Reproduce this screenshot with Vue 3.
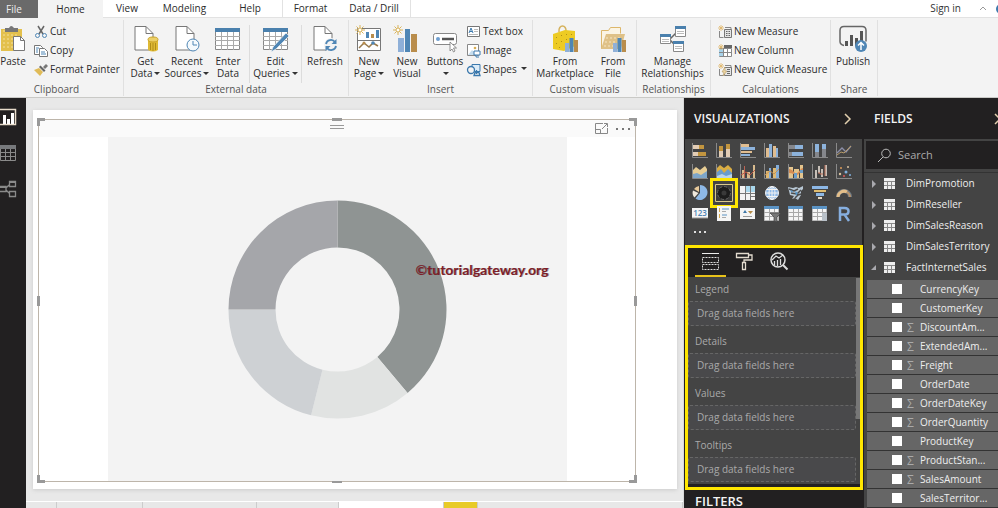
<script setup>
import { ref } from 'vue'

const tabs = ['File', 'Home', 'View', 'Modeling', 'Help', 'Format', 'Data / Drill']

const doc = '<path d="M3 1.5h11l7 7V25H3z" fill="#fff" stroke="#777"/><path d="M14 1.5v7h7" fill="none" stroke="#777"/>'
const grid = '<path d="M1.500 3.500h24v21h-24z" fill="#fff" stroke="#888"/><path d="M1 3h25v4H1z" fill="#4a80ad"/><path d="M1 11.500h25M1 15.500h25M1 20.500h25M7.500 7v18M13.500 7v18M19.500 7v18" stroke="#aaa"/>'
const spark = '<path d="M5 0v10M0 5h10M1.500 1.500l7 7M8.500 1.500l-7 7" stroke="#d9b45c"/><circle cx="5" cy="5" r="2" fill="#fff" stroke="#d9b45c"/>'
const bars = '<path d="M5 13h6v14H5z" fill="#8fb0d8"/><path d="M12 4h5v23h-5z" fill="#4f86b5"/><path d="M18 9h6v18h-6z" fill="#b98d4c"/>'
const miniBars = '<path d="M14 18h4v9h-4z" fill="#8fb0d8"/><path d="M18.500 13h4v14h-4z" fill="#4f86b5"/><path d="M23 15h4v12h-4z" fill="#b98d4c"/>'

const big = {
  paste: '<path d="M2 4h21v22H2z" fill="#e3c04d"/><path d="M4 6h16M4 10h16M4 14h16M4 18h16M4 22h16" stroke="#f3dfa0" stroke-dasharray="2 2"/><path d="M6 3h4q2-4 5 0h4v4H6z" fill="#777"/><path d="M14.500 11.500h7l4 4v10h-11z" fill="#fff" stroke="#777"/><path d="M21.500 11.500v4h4" fill="none" stroke="#777"/>',
  getData: doc + '<path d="M16 15h10v10q-5 3-10 0z" fill="#dfba35"/><ellipse cx="21" cy="14.500" rx="5" ry="2.500" fill="#ecd068" stroke="#c9a227"/><path d="M18.500 18v7M21 18v8M23.500 18v7" stroke="#b08d1a"/>',
  recent: doc + '<circle cx="20" cy="20" r="6" fill="#f5fafd" stroke="#4f86b5"/><path d="M20 16v4h4" fill="none" stroke="#4f86b5"/>',
  enter: grid,
  edit: grid + '<path d="M24 8l3 3-13 13-5 3 2-5z" fill="#4f86b5" stroke="#f3f3f3" stroke-width=".7"/>',
  refresh: doc + '<circle cx="20" cy="20" r="7" fill="#f3f3f3"/><path d="M15 19a5 5 0 0 1 9-2M25 21a5 5 0 0 1-9 2" fill="none" stroke="#4f86b5" stroke-width="1.800"/><path d="M25.500 14v5h-5zM14.500 26v-5h5z" fill="#4f86b5"/>',
  newPage: '<path d="M2.500 3.500h23v22h-23zM2.500 15.500h23" fill="#fff" stroke="#777"/><path d="M11 7h3v6h-3zM21 5h3v8h-3z" fill="#4f86b5"/><path d="M16 9h3v4h-3z" fill="#b98d4c"/><path d="M4 23l5-5 5 4 4-4 5 3" fill="none" stroke="#9a7a4c" stroke-width="1.500"/><circle cx="9" cy="18" r="1.500" fill="#b98d4c"/><circle cx="18" cy="18" r="1.800" fill="#4f86b5"/>' + spark,
  newVisual: bars + spark,
  buttons: '<rect x="2.500" y="8.500" width="23" height="11" rx="2" fill="#fff" stroke="#888"/><circle cx="7" cy="14" r="2" fill="#6f9fd0"/><path d="M11 14h12" stroke="#555" stroke-width="2.500"/><path d="M19 17v9l2-2 1.500 3 1.500-1-1.500-3h3z" fill="#fff" stroke="#777" stroke-width=".8"/>',
  market: '<path d="M8 7C7-1 16-1 15 7" fill="none" stroke="#d5b25d" stroke-width="1.500"/><path d="M2 9l12-4 10 1v15l-11 5-11-2z" fill="#edcb23"/><path d="M5 12l1 1M10 10l1 1M15 9l1 1M20 9l1 1M5 18l1 1M10 16l1 1M15 14l1 1M8 22l1 1" stroke="#b29116"/>' + miniBars,
  file: '<path d="M2.500 24V5.500h7l2-3h10v6" fill="#fbf4e4" stroke="#ddb76b"/><path d="M2 24L7 9h19l-4 15z" fill="#dfc187"/><path d="M7 13h14M6 17h12M5 21h9" stroke="#f6e6c6" stroke-dasharray="2 2"/>' + miniBars,
  manage: '<path d="M11 14l6-6M11 15l5 5" stroke="#666" stroke-width="1.500"/><path d="M16.500 1.500h10v10h-10zM1.500 9.500h10v9h-10zM14.500 16.500h10v10h-10z" fill="#fff" stroke="#888"/><path d="M16 1h11v3H16zM1 9h11v3H1zM14 16h11v3H14z" fill="#4a80ad"/><path d="M18 6.500h7M18 8.500h7M3 14.500h7M3 16.500h7M16 21.500h7M16 23.500h7" stroke="#bbb"/>',
  publish: '<path d="M5 20.500q-4-1-4-4v-11q0-4 4-4h18q4 0 4 4v11" fill="none" stroke="#666" stroke-width="1.500"/><path d="M6 16h3v5H6zM11 10h3v11h-3zM16 13h3v8h-3zM21 6h3v12h-3z" fill="#555"/><circle cx="22" cy="21" r="6" fill="#4f86b5"/><path d="M22 25v-7M19 20.500l3-3 3 3" fill="none" stroke="#fff" stroke-width="1.500"/>',
}
const calcSpark = '<path d="M3 0v6M0 3h6M1 1l4 4M5 1L1 5" stroke="#e0b66a" stroke-width=".8"/>'
const small = {
  cut: '<path d="M4 1l5 8M10 1L5 9" stroke="#666" stroke-width="1.500"/><circle cx="3.500" cy="10.500" r="2" fill="none" stroke="#4f86b5"/><circle cx="10.500" cy="10.500" r="2" fill="none" stroke="#4f86b5"/>',
  copy: '<path d="M.5 1.500h6l2 2v7h-8z" fill="#fff" stroke="#777"/><path d="M5.500 4.500h5l3 3v5h-8z" fill="#fff" stroke="#777"/><path d="M2 4h3M2 6h2M2 8h2M7 8h4M7 10h5" stroke="#4f86b5"/>',
  painter: '<path d="M0 7l5-2 4 4-3 4z" fill="#e0bb58"/><path d="M5 4l5 5 1.500-1.500-5-5z" fill="#666"/><path d="M9 4l3-3 2 2-3 3z" fill="#777"/>',
  text: '<path d="M.5 1.500h12v10H.5z" fill="#fff" stroke="#777"/><path d="M2 8l2-5 2 5M3 6.500h2" fill="none" stroke="#3b79ad"/><path d="M7 4.500h4M7 6.500h4M2 9.500h9" stroke="#bbb"/>',
  image: '<path d="M.5.5h11v11H.5z" fill="#fff" stroke="#888"/><path d="M1 11l4-5 3 3v2z" fill="#c5dced"/><circle cx="8" cy="4" r="1.300" fill="#d9ad52"/><path d="M7 7h6v4H7zM9 11v2h3" fill="#fff" stroke="#3b79ad"/>',
  shapes: '<path d="M5 1.500h8v7H5z" fill="#dcecf8" stroke="#3b79ad"/><circle cx="4" cy="7" r="3.500" fill="#f3f3f3" stroke="#3b79ad" stroke-width="1.300"/><path d="M9.500 7v4M7 12.500h6l-1-3H8z" fill="#f3f3f3" stroke="#3b79ad" stroke-width="1.300"/>',
  measure: '<path d="M1.500 6v6.500h4M7 2.500h6v3" fill="none" stroke="#888"/><path d="M6.500 4.500h7v8h-7z" fill="#e5e5e5" stroke="#777"/><path d="M8 6.500h4M8 8.500h4M8 10.500h4" stroke="#666" stroke-dasharray="1 .5"/>' + calcSpark,
  column: '<path d="M1.500 4.500h12v8h-12z" fill="#fff" stroke="#888"/><path d="M1 5h4v7H1z" fill="#a8d2e9"/><path d="M6 1h8v3H6z" fill="#666"/><path d="M5.500 4v8M9.500 4v8M1 8.500h12" stroke="#888"/>' + calcSpark,
  quick: '<path d="M1.500 6v6.500h4M7 2.500h6v3" fill="none" stroke="#888"/><path d="M6.500 4.500h7v8h-7z" fill="#e5e5e5" stroke="#777"/><path d="M9 6.500h3M9 8.500h3M9 10.500h3" stroke="#666"/><path d="M7 4L4 9h2l-1 4 4-5H7z" fill="#f1d9a4" stroke="#b79a66" stroke-width=".6"/>' + calcSpark,
}

const groups = [
  { name: 'Clipboard', cls: 'clipboard', items: [
    { icon: big.paste, lines: ['Paste'] },
    { list: [['Cut', small.cut], ['Copy', small.copy], ['Format Painter', small.painter]] }] },
  { name: 'External data', cls: 'external', items: [
    { icon: big.getData, lines: ['Get', 'Data'], drop: true },
    { icon: big.recent, lines: ['Recent', 'Sources'], drop: true },
    { icon: big.enter, lines: ['Enter', 'Data'] },
    { icon: big.edit, lines: ['Edit', 'Queries'], drop: true, fenced: true },
    { icon: big.refresh, lines: ['Refresh'] }] },
  { name: 'Insert', cls: 'insert', items: [
    { icon: big.newPage, lines: ['New', 'Page'], drop: true },
    { icon: big.newVisual, lines: ['New', 'Visual'] },
    { icon: big.buttons, lines: ['Buttons', ''], drop: true },
    { list: [['Text box', small.text], ['Image', small.image], ['Shapes', small.shapes, true]] }] },
  { name: 'Custom visuals', cls: 'custom', items: [
    { icon: big.market, lines: ['From', 'Marketplace'] },
    { icon: big.file, lines: ['From', 'File'] }] },
  { name: 'Relationships', cls: 'single', items: [{ icon: big.manage, lines: ['Manage', 'Relationships'] }] },
  { name: 'Calculations', cls: 'calc', items: [
    { list: [['New Measure', small.measure], ['New Column', small.column], ['New Quick Measure', small.quick]] }] },
  { name: 'Share', cls: 'single', items: [{ icon: big.publish, lines: ['Publish'] }] },
]

const views = [
  { name: 'Report', on: true, art: '<path d="M-1 .5h16.500v15H-1z" fill="none" stroke="#e8dccb" stroke-width="1.500"/><path d="M3 6h3v9H3zM7 10h3v5H7zM11 4h3v11h-3z" fill="#fff"/>' },
  { name: 'Data', art: '<path d="M.5.5h15v15H.5zM0 7.500h16M0 11.500h16M5.500 4v12M10.500 4v12" fill="none" stroke="#8a8a8a"/><path d="M0 0h16v4H0z" fill="#77797c"/>' },
  { name: 'Model', art: '<path d="M-1 5.500h7v5h-7zM9.500.5h6v5h-6zM9.500 10.500h6v5h-6zM6 7l3-3M6 9l3 3" fill="none" stroke="#8a8a8a" stroke-width="1.300"/><path d="M9 0h7v2H9zM0 5h6v2H0z" fill="#8a8a8a"/>' },
]

const axis = '<path d="M.5 0v14.500H16" fill="none" stroke="#8a8a8a"/>'
const table = '<path d="M.5 1.500h14v13H.5z" fill="#f5f5f5" stroke="#bbb"/><path d="M0 0h15v3H0z" fill="#5b93c4"/><path d="M0 6.500h15M0 10.500h15M5.500 3v12M10.500 3v12" stroke="#a8a8a8"/>'
const visuals = [
  ['Stacked bar chart', axis + '<path d="M1 2h6v4H1zM1 9h5v4H1z" fill="#e3cdb5"/><path d="M7 2h5v4H7zM6 9h8v4H6z" fill="#c2953f"/>'],
  ['Stacked column chart', axis + '<path d="M3 8h4v6H3zM10 6h4v8h-4z" fill="#e3cdb5"/><path d="M3 3h4v5H3zM10 1h4v5h-4z" fill="#c2953f"/>'],
  ['Clustered bar chart', axis + '<path d="M1 1h8v3H1zM1 8h11v2H1z" fill="#e0bd90"/><path d="M1 4h14v3H1zM1 11h9v2H1z" fill="#8db3dc"/>'],
  ['Clustered column chart', axis + '<path d="M2 5h3v9H2zM9 3h3v11H9z" fill="#e0bd90"/><path d="M5 1h3v13H5zM12 5h2v9h-2z" fill="#8db3dc"/>'],
  ['100% stacked bar chart', axis + '<path d="M1 2h8v4H1zM1 9h5v4H1z" fill="#85878c"/><path d="M7 2h8v4H7zM4 9h11v4H4z" fill="#8db3dc"/>'],
  ['100% stacked column chart', axis + '<path d="M3 1h4v8H3zM10 1h4v5h-4z" fill="#8db3dc"/><path d="M3 9h4v5H3zM10 6h4v8h-4z" fill="#85878c"/>'],
  ['Line chart', axis + '<path d="M1 10l5-5 4 4 5-6" fill="none" stroke="#8c8fa8" stroke-width="1.300"/><path d="M1 12l4-3 3 1 7-7" fill="none" stroke="#b79b6a"/>'],
  ['Area chart', axis + '<path d="M1 6l3-3 4 3 5-4 2 3v9H1z" fill="#e7cd94"/><path d="M1 10l4-1 4 2 6-4v7H1z" fill="#7ea6ca"/>'],
  ['Stacked area chart', axis + '<path d="M1 4l3-3 4 3 4-3 4 4v9H1z" fill="#d9ad43"/><path d="M1 8l4-3 3 4 4-4 4 4v5H1z" fill="#6a9ccc"/><path d="M1 12l5-2 4 2 6-2v4H1z" fill="#b9d3ea"/>'],
  ['Line and stacked column chart', axis + '<path d="M2 6h3v8H2zM7 8h3v6H7zM13 1h2v13h-2z" fill="#d8bb8e"/><path d="M1 11l5-3 4 3 5-5" fill="none" stroke="#bd5745"/><path d="M4 2h1v12H4z" fill="#bc6454"/>'],
  ['Line and clustered column chart', axis + '<path d="M2 7h3v7H2zM9 4h3v10H9z" fill="#dfb973"/><path d="M5 4h2v10H5zM12 1h3v13h-3z" fill="#83add9"/><path d="M1 11l5-4 4 3 5-5" fill="none" stroke="#c89355"/>'],
  ['Ribbon chart', axis + '<path d="M1 3h4v11H1zM6 5h5v9H6zM12 1h3v13h-3z" fill="#e4c58e"/><path d="M1 5c4 0 5 5 8 4s3-5 6-5v3c-3 0-4 4-6 4S4 9 1 9z" fill="#d58c54"/><path d="M6 9h3v5H6zM12 6h3v3h-3z" fill="#6c9dc9"/>'],
  ['Waterfall chart', axis + '<path d="M3 6h2v8H3zM6 2h2v7H6zM9 5h2v8H9zM13 1h2v11h-2z" fill="#c7c0b8"/><path d="M6 9h2v1h3M13 1v11" stroke="#b96e59" fill="none"/>'],
  ['Scatter chart', axis + '<circle cx="5" cy="4" r="1" fill="#dd9b58"/><circle cx="10" cy="8" r="1.500" fill="#7fb0df"/><circle cx="12" cy="3" r="1" fill="#d9c2a0"/><circle cx="4" cy="10" r="1.200" fill="#d9c2a0"/><circle cx="14" cy="11" r="1" fill="#7fb0df"/><circle cx="8" cy="12" r="1" fill="#d55"/>'],
  ['Pie chart', '<path d="M8 8V0a7.500 7.500 0 1 1-4.500 13.500z" fill="#8db8e6"/><path d="M7 7V1a7 7 0 0 0-5 3z" fill="#e7c99a"/><path d="M6.500 8L1 5.500a7 7 0 0 0 1.500 7z" fill="#efe8dc"/>'],
  ['Donut chart', '<path d="M-.5-.5h17v17h-17z" fill="#3a3a3a" stroke="#d9c88d"/><circle cx="8" cy="8" r="4.500" fill="none" stroke="#1d1d1d" stroke-width="4"/><circle cx="8" cy="8" r="6.500" fill="none" stroke="#666" stroke-dasharray="3 2"/>'],
  ['Treemap', '<path d="M0 1h15v14H0z" fill="#f3f3f3"/><path d="M5 1h10v6H5z" fill="#a9d7ec"/><path d="M5.500 1v14M0 8.500h15M10.500 1v7M10 11.500h5M10.500 8v7" stroke="#777"/>'],
  ['Map', '<circle cx="8" cy="8" r="6.500" fill="#8db8e6" stroke="#e8eef5"/><path d="M8 1.500v13M1.500 8h13M3 4.500h10M3 11.500h10" stroke="#f3f3f3" fill="none"/><ellipse cx="8" cy="8" rx="3" ry="6.500" fill="none" stroke="#f3f3f3"/>'],
  ['Filled map', '<path d="M0 2l5 1 3-1 3 1 4-2v3l-2 2v4l-3 5-3-2-3 1 2-3-4-1z" fill="#b8c7d4"/><path d="M1 4l5 2 4-2M3 8l6 1 4-4M7 13l3-3 3-1" fill="none" stroke="#4c4c4c" stroke-width="1.500"/><path d="M7 6l3 2-2 3zM2 5l3 1-1 2z" fill="#5797ca"/>'],
  ['Funnel', '<path d="M0 1h16v3H0z" fill="#8db8e6"/><path d="M2 5h12v2H2z" fill="#e0bd70"/><path d="M4 8h8v3H4z" fill="#8db8e6"/><path d="M6 12h4v2H6z" fill="#e8dcc6"/>'],
  ['Gauge', '<path d="M2 12a6 6 0 0 1 12 0" fill="none" stroke="#707b84" stroke-width="4"/><path d="M2 12a6 6 0 0 1 9-5" fill="none" stroke="#e4be89" stroke-width="3"/><path d="M11 7a6 6 0 0 1 3 5" fill="none" stroke="#b9936a" stroke-width="2"/>'],
  ['Card', '<path d="M0 2h16v10H0z" fill="#f5f5f5"/><text x="8" y="10" text-anchor="middle" font-size="8" font-weight="600" fill="#4f86b5">123</text><path d="M0 12h16" stroke="#999"/>'],
  ['Multi-row card', '<path d="M1 0h14v15H1z" fill="#f5f5f5"/><path d="M3 2h1v4H3zM3 8h1v4H3z" fill="#d6a84c"/><path d="M6 3h7M6 9h5" stroke="#5b93c4"/><path d="M6 5.500h4M6 11.500h4" stroke="#aaa"/>'],
  ['KPI', '<path d="M0 2h15v11H0z" fill="#f5f5f5"/><path d="M5 4l2 3H3z" fill="#3f78a8"/><path d="M8 5h5l-2.500 3z" fill="#b58c48"/><path d="M3 10.500h9" stroke="#999"/>'],
  ['Slicer', table + '<path d="M6 7h11l-4 4v5l-3-1v-4z" fill="#777" stroke="#444" stroke-width=".7"/>'],
  ['Table', table],
  ['Matrix', table + '<path d="M10 7h5v8h-5z" fill="#b9c1c9"/>'],
  ['R script visual', '<path d="M4 15V2h4.500q4 0 4 3.300T8.500 8.600H4M8.500 8.600L13 15" fill="none" stroke="#86afe0" stroke-width="2.500"/>'],
]

const paneTabs = [
  ['Fields', '<path d="M1 1.500h17" stroke="#eee"/><path d="M1.500 5.500h16v5h-16zM1.500 12.500h16v5h-16z" fill="none" stroke="#ddd" stroke-dasharray="2 1"/>'],
  ['Format', '<path d="M1.500 1.500h12v4h-12zM14 3h3v5H9v3M7.500 10.500h3v7h-3z" fill="none" stroke="#e4dccf" stroke-width="1.300"/>'],
  ['Analytics', '<circle cx="9" cy="8" r="7" fill="none" stroke="#ddd" stroke-width="1.500"/><path d="M3 8l4-4 3 2 4-3M5.500 13V9M8.500 14V8M11.500 13V7" fill="none" stroke="#ddd" stroke-width="1.300"/><path d="M14 13l4.500 4.500" stroke="#ddd" stroke-width="2"/>'],
]
const wells = ['Legend', 'Details', 'Values', 'Tooltips']
const tables = ['DimPromotion', 'DimReseller', 'DimSalesReason', 'DimSalesTerritory', 'FactInternetSales']
const fields = ref([
  ['CurrencyKey', false], ['CustomerKey', false], ['DiscountAm...', true], ['ExtendedAm...', true],
  ['Freight', true], ['OrderDate', false], ['OrderDateKey', true], ['OrderQuantity', true],
  ['ProductKey', false], ['ProductStan...', true], ['SalesAmount', true], ['SalesTerritor...', false],
])

// Donut slices: start angle, end angle (clockwise from the top) and fill
function slice(from, to) {
  const R = 109, r = 62
  const at = (deg, rad) => {
    const t = (deg * Math.PI) / 180
    return `${(229.5 + rad * Math.sin(t)).toFixed(2)} ${(172.5 - rad * Math.cos(t)).toFixed(2)}`
  }
  return `M${at(from, R)}A${R} ${R} 0 0 1 ${at(to, R)}L${at(to, r)}A${r} ${r} 0 0 0 ${at(from, r)}Z`
}
const slices = [
  [0, 140, '#8f9493'], [140, 194, '#e1e3e2'], [194, 270, '#ced1d4'], [270, 360, '#a5a6aa'],
].map(([a, b, fill]) => ({ d: slice(a, b), fill }))
</script>

<template>
  <div class="app">
    <nav class="tabs" aria-label="Ribbon tabs">
      <button v-for="t in tabs" :key="t" class="tab" :class="t.slice(0, 4).toLowerCase()">{{ t }}</button>
      <div class="account">
        <a href="#">Sign in</a>
        <svg width="8" height="5" viewBox="0 0 8 5"><path d="M1 4l3-3 3 3" fill="none" stroke="#999" /></svg>
        <span class="help-dot"></span>
      </div>
    </nav>

    <header class="ribbon">
      <section v-for="g in groups" :key="g.name" class="group" :class="g.cls">
        <div class="group-body">
          <template v-for="(it, i) in g.items" :key="i">
            <div v-if="it.list" class="small-list">
              <button v-for="s in it.list" :key="s[0]" class="small-btn">
                <svg width="14" height="14" viewBox="0 0 14 14" v-html="s[1]"></svg>{{ s[0] }}<i v-if="s[2]" class="caret"></i>
              </button>
            </div>
            <button v-else class="big-btn" :class="{ fenced: it.fenced }">
              <svg width="28" height="28" viewBox="0 0 28 28" v-html="it.icon"></svg>
              <span v-for="(l, j) in it.lines" :key="j" class="line">{{ l }}<i v-if="it.drop && j === 1" class="caret"></i></span>
            </button>
          </template>
        </div>
        <div class="group-name">{{ g.name }}</div>
      </section>
    </header>

    <main class="work">
      <nav class="rail" aria-label="Views">
        <button v-for="v in views" :key="v.name" :aria-label="v.name">
          <svg width="17" height="16" viewBox="0 0 17 16" v-html="v.art"></svg>
        </button>
      </nav>

      <section class="stage">
        <div class="canvas">
          <div class="page">
            <div class="visual">
              <i v-for="h in ['tl', 'tr', 'bl', 'br', 't', 'b', 'l', 'r']" :key="h" class="handle" :class="h"></i>
              <div class="visual-head">
                <span class="grip"></span>
                <button aria-label="Focus mode">
                  <svg width="14" height="12" viewBox="0 0 14 12"><path d="M8 .5H.5v10h12V5M.5 6.500h5v4M7 6l5-5M9 .5h3.500V4" fill="none" stroke="#888" /></svg>
                </button>
                <button aria-label="More options">
                  <svg width="14" height="4" viewBox="0 0 14 4"><path d="M0 1h2v2H0zM6 1h2v2H6zM12 1h2v2h-2z" fill="#777" /></svg>
                </button>
              </div>
              <div class="plot">
                <svg viewBox="0 0 459 344" role="img" aria-label="Donut chart">
                  <path v-for="s in slices" :key="s.d" :d="s.d" :fill="s.fill" />
                </svg>
                <span class="mark">©tutorialgateway.org</span>
              </div>
            </div>
          </div>
        </div>
        <div class="sheets">
          <span></span><span></span><span></span><span></span><span class="active"></span><span class="add"></span><span></span>
        </div>
      </section>

      <aside class="viz">
        <h2 class="pane-title">VISUALIZATIONS
          <svg width="8" height="12" viewBox="0 0 8 12"><path d="M1 1l5 5-5 5" fill="none" stroke="#e2cfae" stroke-width="1.500" /></svg>
        </h2>
        <div class="gallery">
          <button v-for="(v, i) in visuals" :key="v[0]" :aria-label="v[0]" :class="{ chosen: i === 15 }">
            <svg width="16" height="16" viewBox="0 0 16 16" v-html="v[1]"></svg>
          </button>
          <button class="more" aria-label="More visuals"><i></i><i></i><i></i></button>
        </div>
        <div class="wells">
          <div class="well-tabs">
            <button v-for="(p, i) in paneTabs" :key="p[0]" :aria-label="p[0]" :class="{ on: i === 0 }">
              <svg width="19" height="19" viewBox="0 0 19 19" v-html="p[1]"></svg>
            </button>
          </div>
          <div class="well-body">
            <div class="well-list">
              <div v-for="w in wells" :key="w" class="well">
                <h3>{{ w }}</h3>
                <div class="drop">Drag data fields here</div>
              </div>
            </div>
            <div class="track"><i></i></div>
          </div>
        </div>
        <h2 class="filters">FILTERS</h2>
      </aside>

      <aside class="fields">
        <h2 class="pane-title">FIELDS
          <svg width="8" height="12" viewBox="0 0 8 12"><path d="M1 1l5 5-5 5" fill="none" stroke="#e2cfae" stroke-width="1.500" /></svg>
        </h2>
        <div class="fields-body">
          <label class="search">
            <svg width="15" height="15" viewBox="0 0 15 15"><circle cx="9" cy="5.500" r="4.300" fill="none" stroke="#bbb" /><path d="M6 9l-5 5" stroke="#bbb" /></svg>
            <input type="text" placeholder="Search" aria-label="Search fields" />
          </label>
          <div class="table-list">
            <button v-for="(t, i) in tables" :key="t" class="table-row">
              <svg width="6" height="8" viewBox="0 0 6 8"><path :d="i === 4 ? 'M5 1v5H0z' : 'M1 0l4 4-4 4z'" fill="#a9a9ae" /></svg>
              <svg class="sheet" width="11" height="11" viewBox="0 0 11 11"><path d="M0 0h11v11H0z" fill="#eee" /><path d="M0 3.500h11M0 7.500h11M3.500 3v8M7.500 3v8" stroke="#888" /></svg>
              {{ t }}
            </button>
          </div>
          <label v-for="f in fields" :key="f[0]" class="field">
            <input type="checkbox" /><span class="sigma">{{ f[1] ? 'Σ' : '' }}</span>{{ f[0] }}
          </label>
        </div>
      </aside>
    </main>
  </div>
</template>

<style>
body { margin: 0; }
</style>

<style scoped>
.app { display: flex; flex-direction: column; height: 100vh; overflow: hidden; font: 10px/11px "Open Sans", "Noto Sans", sans-serif; color: #2b2b2b; background: #f3f3f3; }
.app * { box-sizing: border-box; }
button { border: 0; padding: 0; background: none; font: inherit; color: inherit; cursor: pointer; }
svg { display: block; flex: none; overflow: visible; }
h2, h3 { margin: 0; }

.tabs { display: grid; grid-template-columns: 38px 65px 48px 67px 64px 56px 73px 1fr; height: 18px; background: #fff; flex: none; }
.tab { height: 18px; border-bottom: 1px solid #e2e2e2; }
.tab.file { background: #6a6a6a; color: #eee; border: 0; padding-right: 10px; }
.tab.home { background: #f3f3f3; border: 0; }
.tab.form { border-left: 1px solid #e2e2e2; }
.tab.data { border-right: 1px solid #e2e2e2; }
.account { display: flex; justify-content: flex-end; align-items: center; gap: 18px; border-bottom: 1px solid #e2e2e2; overflow: hidden; }
.account a { color: #333; text-decoration: none; }
.help-dot { width: 10px; height: 10px; margin: 0 -8px 0 -9px; border-radius: 50%; background: #3b79ad; }

.ribbon { display: grid; grid-template-columns: 124px 225px 184px 104px 74px 120px 47px 1fr; height: 80px; padding-top: 2px; background: #f3f3f3; border-bottom: 1px solid #c9c9c6; flex: none; }
.group { display: flex; flex-direction: column; border-right: 1px solid #e0e0e0; min-width: 0; margin-bottom: 3px; }
.group-body { display: grid; height: 63px; padding-top: 5px; }
.clipboard .group-body { grid-template-columns: 34px 1fr; }
.clipboard .big-btn { margin-left: -8px; }
.external .group-body { grid-template-columns: 43px 40px 42px 53px 46px; }
.insert .group-body { grid-template-columns: 40px 36px 40px 1fr; }
.custom .group-body { grid-template-columns: 64px 32px; }
.calc .group-body { padding-left: 5px; }
.group-name { text-align: center; line-height: 13px; color: #555; }
.clipboard .group-name { padding-right: 10px; }
.big-btn { display: flex; flex-direction: column; align-items: center; white-space: nowrap; }
.single .big-btn { padding-right: 2px; }
.big-btn svg { margin-bottom: 2px; }
.line { height: 12px; line-height: 12px; }
.fenced { border-left: 1px solid #dcdcdc; border-right: 1px solid #dcdcdc; }
.caret { display: inline-block; margin: 0 0 2px 2px; border: 3px solid transparent; border-top-color: #333; border-bottom: 0; }
.small-list { display: flex; flex-direction: column; margin-top: -3px; }
.small-btn { display: flex; align-items: center; gap: 2px; height: 19px; white-space: nowrap; padding-left: 2px; }
.clipboard .small-btn { padding-left: 0; }

.work { flex: 1; display: grid; grid-template-columns: 26px 1fr 178px 136px; grid-template-rows: minmax(0, 1fr); min-height: 0; }
.rail { display: flex; flex-direction: column; gap: 20px; padding-top: 11px; background: #222021; overflow: hidden; }
.stage { display: flex; flex-direction: column; min-width: 0; background: #e8e8e8; border-right: 1px solid #d8d8d8; }
.canvas { flex: 1; display: flex; padding: 12px 6px 12px 7px; min-height: 0; }
.page { flex: 1; display: flex; padding: 9px 41px 7px 5px; background: #fff; box-shadow: 0 1px 4px #ccc; min-width: 0; }
.visual { position: relative; flex: 1; display: flex; flex-direction: column; border: 1px solid #bdb5aa; min-width: 0; }
.visual-head { display: flex; justify-content: flex-end; align-items: center; gap: 7px; height: 17px; padding-right: 5px; background: #fafafa; flex: none; }
.grip { position: absolute; left: calc(50% - 7px); top: 5px; width: 14px; height: 4px; border: 1px solid #999; border-width: 1px 0; }
.handle { position: absolute; border: 0 solid #999; width: 8px; height: 8px; }
.tl { left: -2px; top: -2px; border-width: 3px 0 0 3px; }
.tr { right: -2px; top: -2px; border-width: 3px 3px 0 0; }
.bl { left: -2px; bottom: -2px; border-width: 0 0 3px 3px; }
.br { right: -2px; bottom: -2px; border-width: 0 3px 3px 0; }
.t, .b { left: calc(50% - 5px); width: 10px; height: 3px; background: #999; }
.t { top: -2px; }
.b { bottom: -2px; }
.l, .r { top: calc(50% - 5px); width: 3px; height: 10px; background: #999; }
.l { left: -2px; }
.r { right: -2px; }
.plot { position: relative; flex: 1; margin: 0 68px 0 69px; background: #f3f3f3; min-height: 0; }
.plot svg { width: 100%; height: 100%; }
.mark { position: absolute; left: 67%; top: 36%; font: 700 14px/18px Lato, sans-serif; color: #7d2029; text-shadow: 1px 0 0 #2226; white-space: nowrap; }
.sheets { display: grid; grid-template-columns: 31px 86px 114px 82px 105px 34px 1fr; height: 7px; border-top: 1px solid #fff; flex: none; }
.sheets span { border-right: 1px solid #ccc; }
.sheets .active { background: #fff; }
.sheets .add { background: #e8cb28; }

.viz { display: flex; flex-direction: column; background: #222021; min-width: 0; }
.pane-title { display: flex; justify-content: space-between; align-items: center; height: 41px; padding: 0 10px; font-size: 12px; font-weight: 600; color: #f3f3f3; flex: none; }
.gallery { display: grid; grid-template-columns: repeat(7, 16px); justify-content: space-between; grid-auto-rows: 16px; row-gap: 5px; height: 106px; padding: 4px 10px 0 7px; margin-left: 1px; background: #444; flex: none; }
.gallery button { position: relative; height: 16px; }
.chosen::after { content: ""; position: absolute; inset: -7px -6px; border: 3px solid #ffe600; }
.gallery .more { display: flex; align-items: center; gap: 3px; padding-left: 2px; height: 10px; }
.more i { width: 2px; height: 2px; background: #ddd; flex: none; }
.wells { display: flex; flex-direction: column; height: 245px; margin: 0 -1px 0 1px; padding-bottom: 3px; border: 3px solid #ffe600; background: #222021; z-index: 1; flex: none; }
.well-tabs { display: flex; gap: 3px; height: 29px; padding-left: 7px; flex: none; }
.well-tabs button { display: flex; justify-content: center; align-items: center; width: 31px; border-bottom: 2px solid transparent; }
.well-tabs .on { border-color: #e8c21a; }
.well-body { flex: 1; display: flex; background: #444; min-height: 0; }
.well-list { flex: 1; display: flex; flex-direction: column; gap: 3px; color: #aaa; }
.well h3 { font-size: 10px; font-weight: 400; line-height: 24px; padding-left: 7px; }
.drop { height: 25px; padding-left: 8px; line-height: 23px; border: 1px dashed #666; border-radius: 2px; background: #49494b; }
.track { width: 4px; padding-top: 1px; }
.track i { display: block; width: 4px; height: 141px; background: #777; }
.filters { padding: 4px 11px 0; font-size: 13px; line-height: 14px; font-weight: 600; color: #f3f3f3; }

.fields { display: flex; flex-direction: column; background: #222021; padding-left: 2px; min-width: 0; overflow: hidden; color: #eee; }
.fields .pane-title { padding-right: 0; margin-right: -4px; }
.fields-body { flex: 1; background: #444; min-height: 0; }
.search { display: flex; align-items: center; gap: 4px; height: 28px; margin: 2px 0 3px 2px; padding-left: 11px; background: #222021; }
.search input { min-width: 0; width: 80px; border: 0; outline: 0; background: none; font: 11px/14px "Open Sans", sans-serif; color: #ccc; }
.search input::placeholder { color: #aaa; opacity: 1; }
.table-list { border-top: 1px solid #333; padding-bottom: 2px; }
.table-row { display: flex; align-items: center; width: 100%; height: 21px; padding-left: 7px; }
.sheet { margin: 0 11px 0 7px; }
.field { display: flex; align-items: center; height: 18px; margin: 0 0 1px 3px; padding-left: 25px; background: #666; box-shadow: 0 1px 0 #333; white-space: nowrap; }
.field input { appearance: none; width: 10px; height: 10px; margin: 0; background: #fff; flex: none; }
.sigma { width: 18px; padding-left: 5px; font-size: 12px; color: #aaa; flex: none; }
</style>
